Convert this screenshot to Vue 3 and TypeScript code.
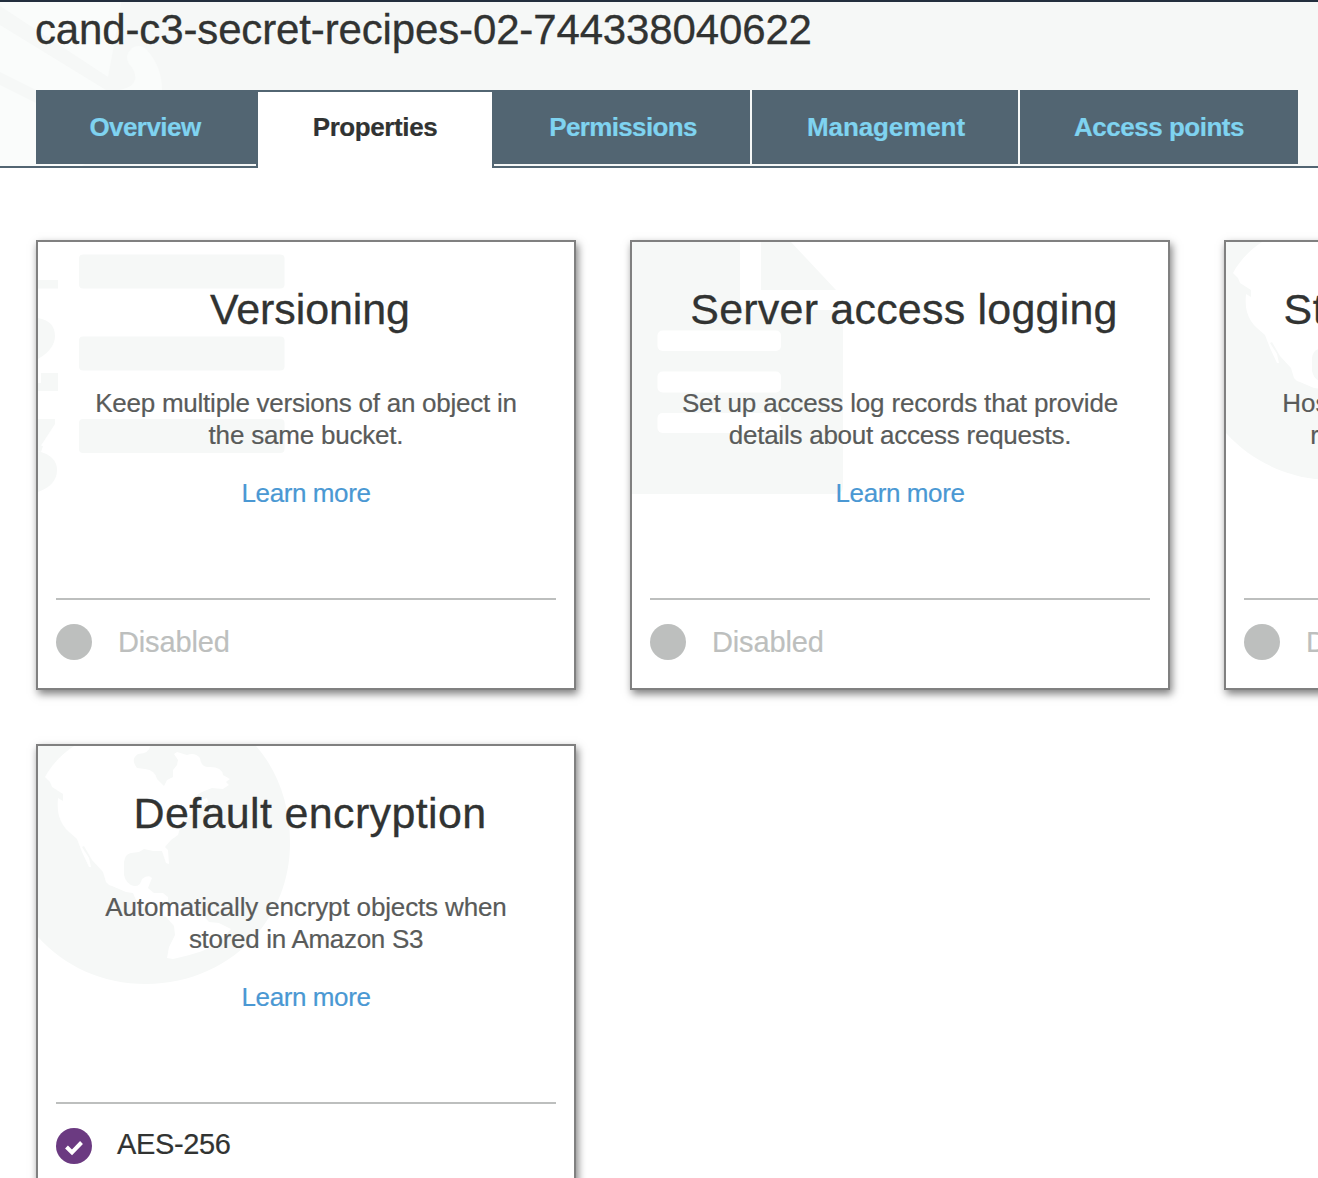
<script setup lang="ts">
type Art = 'list' | 'file' | 'globe'
interface Card {
  title: string
  lines: string[]
  art: Art
  status: string
  enabled: boolean
  key: string
}

const tabs = [
  { label: 'Overview', key: 'overview' },
  { label: 'Properties', key: 'properties' },
  { label: 'Permissions', key: 'permissions' },
  { label: 'Management', key: 'management' },
  { label: 'Access points', key: 'access' },
]

const cards: Card[] = [
  { title: 'Versioning', lines: ['Keep multiple versions of an object in', 'the same bucket.'], art: 'list', status: 'Disabled', enabled: false, key: 'versioning' },
  { title: 'Server access logging', lines: ['Set up access log records that provide', 'details about access requests.'], art: 'file', status: 'Disabled', enabled: false, key: 'logging' },
  { title: 'Static website hosting', lines: ['Host a static website, which does not', 'require server-side technologies.'], art: 'globe', status: 'Disabled', enabled: false, key: 'hosting' },
  { title: 'Default encryption', lines: ['Automatically encrypt objects when', 'stored in Amazon S3'], art: 'globe', status: 'AES-256', enabled: true, key: 'encryption' },
]
</script>

<template>
  <div class="page">
    <header class="header">
      <svg class="mark" width="180" height="164" viewBox="0 2 180 164" aria-hidden="true">
        <path fill="#fafcfb" d="M0 2H121L119 18L108 77L0 6ZM0 25L106 90H120Q134 87 135.500 78Q135 70 129 64Q124 55 132 48Q140 43 147 50Q162 67 162 90L150 120L82 166H0Z" />
        <path fill="#f6f8f7" d="M0 72L36 90V103L0 85Z" />
      </svg>
      <h1 class="bucket">cand-c3-secret-recipes-02-744338040622</h1>
      <nav class="tabs">
        <a v-for="t in tabs" :key="t.key" class="tab" :class="[t.key, { active: t.key === 'properties' }]"><span>{{ t.label }}</span></a>
      </nav>
    </header>
    <main class="grid">
      <section v-for="c in cards" :key="c.key" class="card" :class="c.key">
        <svg class="art" width="300" height="270" viewBox="0 0 300 270" aria-hidden="true">
          <g v-if="c.art === 'list'" fill="#f6f8f7">
            <rect x="41" y="12.500" width="205.500" height="34" rx="4" />
            <rect x="41" y="94.500" width="205.500" height="34" rx="4" />
            <rect x="41" y="177" width="205.500" height="34" rx="4" />
            <path d="M0 38H20V46.500H0ZM0 76Q17 79 17 94Q17 107 0 117ZM0 141H3V131H20V149H0ZM0 177H17V182L4 202L0 207ZM0 209Q19 214 19 228Q19 243 0 250Z" />
            <path d="M0 203L5 204L3 210L0 209Z" />
          </g>
          <g v-else-if="c.art === 'file'">
            <path fill="#f6f8f7" d="M0 0H108V58Q108 68 118 68H211V244Q211 252 203 252H0ZM129 0H159L204 48H129Z" />
            <g fill="#fff">
              <rect x="25.500" y="88.500" width="123.500" height="20.500" rx="5" />
              <rect x="25.500" y="129.500" width="123.500" height="21" rx="5" />
              <rect x="25.500" y="171" width="123.500" height="20" rx="5" />
            </g>
          </g>
          <g v-else>
            <path fill="#f6f8f7" d="M0 0H218C240 25 252 59 252 97C252 177 188 238 108 238C64 238 26 220 0 191Z" />
            <path fill="#fff" d="M36 0C25 7 14 18 7 31L12 36L14 41L25 48L25 55L20 52Q19 64 21 70Q24 80 31 86L39 93L44 106L51 121L53 121L51 112L44 101L46 100L54 114L65 126L68 136Q70 139 74 140L88 146L95 147L98 154L104 161L115 167L128 171L136 180L137 189L131 201L129 212L135 213C155 208 173 205 185 192L193 183L181 177L171 176L165 169L150 166L140 158L130 157L130 151L125 147L116 147L110 142L114 132Q112 129 107 131L104 133Q102 141 96 140Q88 138 86 129V116Q87 108 93 107L101 106L106 103L115 105L124 105L128 117L131 118L130 104L127 101L133 94L140 89L142 82L150 72L163 62L170 56L169 52L155 57Q155 50 164 46L174 42L185 43L191 39L188 36L192 33L185 29Q184 21 172 21Q163 22 162 12Q157 6 149 9L139 6L136 8L140 14L139 19L135 24V31L129 34L126 40L119 33Q117 24 107 23L99 22Q92 13 100 8Q112 7 112 0Z" />
          </g>
        </svg>
        <div class="body">
          <h2>{{ c.title }}</h2>
          <p class="desc"><span v-for="(l, i) in c.lines" :key="i" :class="'line' + i">{{ l }}</span></p>
          <a class="more">Learn more</a>
        </div>
        <footer class="status" :class="{ on: c.enabled }">
          <svg width="36" height="36" viewBox="0 0 36 36" aria-hidden="true">
            <circle cx="18" cy="18" r="18" :fill="c.enabled ? '#6b3a81' : '#bdbfbe'" />
            <path v-if="c.enabled" d="M10.500 19L16 24.500L25.500 14.500" fill="none" stroke="#fff" stroke-width="4" />
          </svg>
          <span>{{ c.status }}</span>
        </footer>
      </section>
    </main>
  </div>
</template>

<style>
html, body { margin: 0; background: #fff; overflow: hidden; }
</style>

<style scoped>
.page { width: 1318px; height: 1178px; overflow: hidden; font-family: "Liberation Sans", Arial, sans-serif; color: #313332; background: #fff; }
.header { position: relative; box-sizing: border-box; height: 168px; border-top: 2px solid #232f3e; border-bottom: 2px solid #526572; background: #f6f8f7; padding: 0 20px 0 36px; }
.mark { position: absolute; left: 0; top: 0; }
.bucket { position: relative; margin: 0 0 0 -1px; height: 88px; box-sizing: border-box; padding-top: 5px; font-size: 42px; line-height: 46px; font-weight: 400; letter-spacing: -0.14px; white-space: nowrap; -webkit-text-stroke: 0.3px; }
.tabs { position: relative; display: flex; align-items: flex-start; height: 74px; }
.tab { box-sizing: border-box; height: 74px; display: flex; justify-content: center; background: #526572; color: #7fd3f0; font-size: 26px; line-height: 74px; font-weight: 700; white-space: nowrap; -webkit-text-stroke: 0.2px; }
.overview { width: 222px; padding-right: 4px; letter-spacing: -0.55px; }
.properties { width: 234px; letter-spacing: -0.4px; }
.permissions { width: 258px; margin-right: 2px; padding-left: 4px; letter-spacing: -0.65px; }
.management { width: 266px; margin-right: 2px; padding-left: 2px; letter-spacing: -0.1px; }
.access { width: 278px; letter-spacing: -0.5px; }
.tab.active { position: relative; height: 78px; border-top: 2px solid #526572; background: #fff; color: #313332; line-height: 70px; }
.tab.active::before, .tab.active::after { content: ""; position: absolute; top: 70px; width: 2px; height: 6px; background: #526572; }
.tab.active::before { left: -2px; border-bottom-right-radius: 2px; }
.tab.active::after { right: -2px; border-bottom-left-radius: 2px; }
.grid { display: grid; grid-template-columns: repeat(3, 540px); gap: 54px; padding: 72px 0 0 36px; width: 1728px; }
.card { position: relative; box-sizing: border-box; height: 450px; border: 2px solid #808080; background: #fff; box-shadow: 2px 4px 8px rgba(0, 0, 0, 0.5); padding: 0 18px; display: flex; flex-direction: column; }
.art { position: absolute; left: 0; top: 0; }
.body { position: relative; height: 356px; text-align: center; }
h2 { margin: 0 -4px 0 4px; padding-top: 42px; font-size: 43px; line-height: 50px; font-weight: 400; white-space: nowrap; -webkit-text-stroke: 0.3px; }
.desc { margin: 53px 0 0; font-size: 26px; line-height: 32px; color: #595b5a; letter-spacing: -0.24px; -webkit-text-stroke: 0.2px; }
.desc span { display: block; white-space: nowrap; }
.versioning h2 { letter-spacing: -0.1px; }
.logging h2 { letter-spacing: 0.2px; }
.hosting h2 { letter-spacing: 0.6px; }
.encryption h2 { letter-spacing: 0.35px; }
.versioning .line1 { letter-spacing: -0.2px; }
.logging .line0 { letter-spacing: -0.16px; }
.hosting .line0 { letter-spacing: -0.08px; }
.hosting .line1 { letter-spacing: -0.3px; }
.encryption .line0 { letter-spacing: -0.14px; }
.encryption .line1 { letter-spacing: -0.3px; }
.more { display: block; margin-top: 26px; font-size: 26px; line-height: 32px; letter-spacing: -0.4px; color: #4a98d3; -webkit-text-stroke: 0.2px; }
.status { position: relative; box-sizing: border-box; height: 90px; border-top: 2px solid #bdbfbe; padding-top: 24px; display: flex; gap: 26px; font-size: 29px; line-height: 36px; letter-spacing: -0.15px; color: #bdbfbe; -webkit-text-stroke: 0.2px; }
.status svg { flex: none; }
.status.on { gap: 25px; color: #313332; letter-spacing: -0.35px; }
.status.on span { line-height: 32px; }
</style>
